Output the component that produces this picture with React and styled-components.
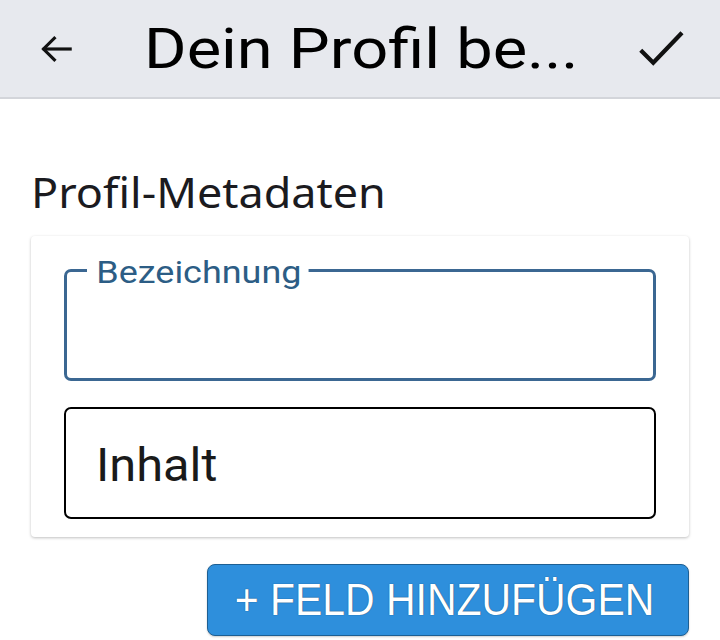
import React from "react";
import styled, { createGlobalStyle } from "styled-components";

const GlobalStyle = createGlobalStyle`
  html, body {
    margin: 0;
    padding: 0;
    background: #ffffff;
    font-family: Roboto, "Noto Sans", sans-serif;
  }
`;

function App() {
  return (
    <Page>
      <GlobalStyle />
      <Header>
        <IconButton aria-label="Zurück">
          <svg width="40" height="40" viewBox="0 0 24 24" fill="none" stroke="#111" strokeWidth="1.9" strokeLinecap="square">
            <path d="M20.5 12H5" />
            <path d="M11 5.5l-6.5 6.5 6.5 6.5" />
          </svg>
        </IconButton>
        <Title>Dein Profil be...</Title>
        <IconButton aria-label="Speichern">
          <svg width="60" height="60" viewBox="0 0 24 24" fill="none" stroke="#111" strokeWidth="1.7">
            <path d="M3.5 12.5l5 5L20 5.5" />
          </svg>
        </IconButton>
      </Header>

      <Content>
        <SectionTitle>Profil-Metadaten</SectionTitle>
        <Card>
          <Field $focused>
            <Legend>Bezeichnung</Legend>
          </Field>
          <Field>
            <Placeholder>Inhalt</Placeholder>
          </Field>
        </Card>
        <Actions>
          <AddButton>
            <ButtonLabel>+ FELD HINZUFÜGEN</ButtonLabel>
          </AddButton>
        </Actions>
      </Content>
    </Page>
  );
}

const Page = styled.div`
  width: 720px;
  height: 640px;
  overflow: hidden;
  background: #fff;
`;

const Header = styled.div`
  height: 99px;
  background: #e7e9ee;
  border-bottom: 2px solid #d3d5da;
  display: flex;
  align-items: center;
  padding: 0 22px 0 20px;
  box-sizing: border-box;
`;

const IconButton = styled.div`
  width: 72px;
  height: 72px;
  display: flex;
  align-items: center;
  justify-content: center;
  flex-shrink: 0;
`;

const Title = styled.h1`
  flex: 1;
  margin: 0 0 0 52px;
  font-family: Roboto, sans-serif;
  font-weight: 400;
  font-size: 56px;
  line-height: 72px;
  color: #000;
  transform: scaleX(1.16);
  transform-origin: left center;
  white-space: nowrap;
`;

const Content = styled.div`
  padding: 67px 31px 0 31px;
`;

const SectionTitle = styled.h2`
  margin: 0 0 18px 0;
  font-family: "Noto Sans", sans-serif;
  font-weight: 400;
  font-size: 42px;
  line-height: 52px;
  color: #1b1b1f;
  transform: scaleX(1.07);
  transform-origin: left center;
`;

const Card = styled.div`
  width: 658px;
  box-sizing: border-box;
  background: #fff;
  border-radius: 4px;
  box-shadow: 0 1px 3px rgba(0, 0, 0, 0.25);
  padding: 33px 33px 18px 33px;
  display: flex;
  flex-direction: column;
  gap: 26px;
`;

const Field = styled.div`
  position: relative;
  height: 112px;
  box-sizing: border-box;
  border: ${(p) => (p.$focused ? "3px solid #3b6792" : "2px solid #000")};
  border-radius: 7px;
  display: flex;
  align-items: center;
  padding-left: 30px;
`;

const Legend = styled.span`
  position: absolute;
  top: -16px;
  left: 20px;
  padding: 0 6px 0 8px;
  background: #fff;
  font-family: Roboto, sans-serif;
  font-size: 31px;
  line-height: 34px;
  color: #2c5d85;
  transform: scaleX(1.16);
  transform-origin: left center;
`;

const Placeholder = styled.span`
  display: inline-block;
  margin-top: 4px;
  font-family: Roboto, sans-serif;
  font-size: 46px;
  color: #1a1a1a;
  transform: scaleX(1.06);
  transform-origin: left center;
`;

const Actions = styled.div`
  display: flex;
  justify-content: flex-end;
  width: 658px;
  margin-top: 27px;
`;

const AddButton = styled.button`
  width: 482px;
  height: 72px;
  border: 1px solid #1d5f93;
  border-radius: 8px;
  background: #2e8fdc;
  padding: 0;
  display: flex;
  align-items: center;
  justify-content: center;
  box-shadow: 0 1px 2px rgba(0, 0, 0, 0.2);
`;

const ButtonLabel = styled.span`
  display: inline-block;
  margin-left: -6px;
  color: #fff;
  font-family: "Liberation Sans", Arial, sans-serif;
  font-size: 44px;
  font-weight: 400;
  white-space: nowrap;
  transform: scaleX(0.93);
  text-shadow: 0 0 1px rgba(10, 40, 70, 0.9);
`;

export default App;
